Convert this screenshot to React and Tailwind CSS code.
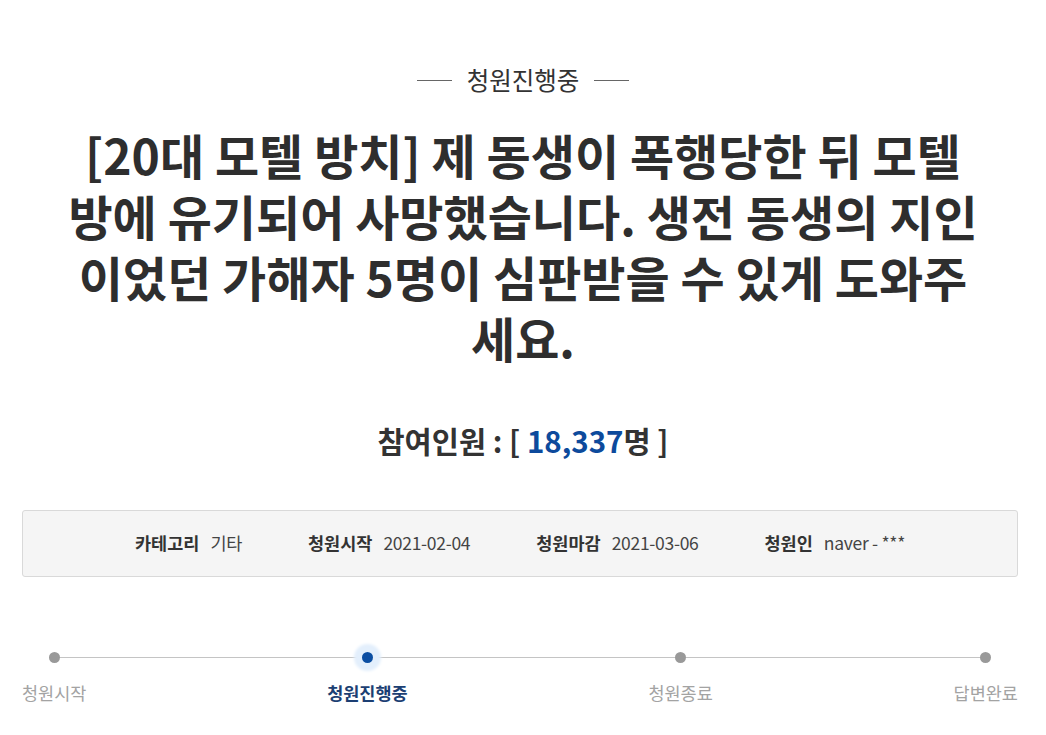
import React from "react";

const F = "font-['Noto_Sans_CJK_KR','Noto_Sans',sans-serif]";

function Step({ label, active }) {
  return (
    <div className="flex flex-col items-center">
      <div className="h-[10px] flex items-center justify-center">
        {active ? (
          <span className="block w-[11px] h-[11px] rounded-full bg-[#0b4ea2] shadow-[0_0_3px_8px_#e3effc]" />
        ) : (
          <span className="block w-[11px] h-[11px] rounded-full bg-[#999999]" />
        )}
      </div>
      <div
        className={
          "mt-[19px] text-[17.5px] leading-[24px] " +
          (active ? "font-bold text-[#1c3f73]" : "text-[#a3a3a3]")
        }
      >
        {label}
      </div>
    </div>
  );
}

function Info({ label, value }) {
  return (
    <div className="flex items-center gap-[11px]">
      <span className="font-bold text-[#333333]">{label}</span>
      <span className="text-[#444444] tracking-[-0.3px]">{value}</span>
    </div>
  );
}

export default function App() {
  return (
    <div className={F + " bg-white min-h-[735px] w-[1046px] text-[#333333]"}>
      <div className="pt-[64px] flex items-center justify-center gap-[15px]">
        <span className="block w-[35px] h-px bg-[#666666]" />
        <span className="text-[24.5px] leading-[32px] text-[#333333]">청원진행중</span>
        <span className="block w-[35px] h-px bg-[#666666]" />
      </div>

      <h1 className="mt-[28px] mx-auto w-[914px] text-center text-[48px] leading-[61px] font-bold text-[#2e2e2e] break-all">
        [20대 모텔 방치] 제 동생이 폭행당한 뒤 모텔 방에 유기되어 사망했습니다. 생전 동생의 지인이었던 가해자 5명이 심판받을 수 있게 도와주세요.
      </h1>

      <div className="mt-[54px] text-center text-[29.5px] leading-[36px] font-bold text-[#333333]">
        참여인원 : [ <span className="text-[#0d4a9c]">18,337</span>명 ]
      </div>

      <div className="mt-[52px] ml-[22px] w-[996px] h-[67px] rounded-[3px] border border-[#d9d9d9] bg-[#f5f5f5] flex items-center justify-center gap-[66px] text-[17.5px]">
        <Info label="카테고리" value="기타" />
        <Info label="청원시작" value="2021-02-04" />
        <Info label="청원마감" value="2021-03-06" />
        <Info label="청원인" value="naver - ***" />
      </div>

      <div className="mt-[75px] ml-[22px] w-[996px] relative">
        <div className="absolute left-[32px] right-[34px] top-[5px] h-px bg-[#c4c4c4]" />
        <div className="relative flex justify-between">
          <Step label="청원시작" />
          <Step label="청원진행중" active />
          <Step label="청원종료" />
          <Step label="답변완료" />
        </div>
      </div>
    </div>
  );
}
